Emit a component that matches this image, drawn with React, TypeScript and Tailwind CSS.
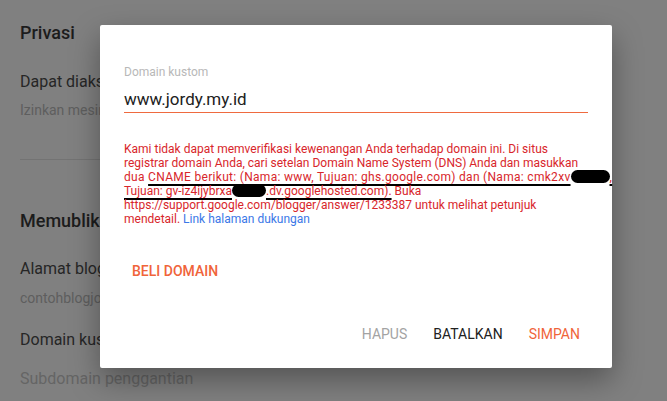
import React from "react";

const Blot = ({ w }: { w: number }) => (
  <span
    className="inline-block h-[13px] bg-black rounded-full align-[-2px]"
    style={{ width: w }}
  />
);

export default function App() {
  return (
    <div
      className="relative w-[667px] h-[401px] overflow-hidden bg-[#808080]"
      style={{ fontFamily: "Roboto, 'Noto Sans', sans-serif" }}
    >
      {/* background page (dimmed) */}
      <div className="flex flex-col pl-[20px] pt-[21px] whitespace-nowrap">
        <div className="text-[18px] leading-[24px] font-medium text-[#1c1c1c]">Privasi</div>
        <div className="mt-[27px] text-[16px] leading-[20px] text-[#262626]">
          Dapat diakses oleh mesin telusur
        </div>
        <div className="mt-[9px] text-[14px] leading-[18px] text-[#5e5e5e]">
          Izinkan mesin telusur menemukan blog Anda
        </div>
        <div className="mt-[40px] w-[300px] border-t border-[#737373]" />
        <div className="mt-[49px] text-[18px] leading-[24px] font-medium text-[#1c1c1c]">
          Memublikasikan
        </div>
        <div className="mt-[26px] text-[16px] leading-[20px] text-[#262626]">Alamat blog</div>
        <div className="mt-[10px] text-[14px] leading-[18px] text-[#5e5e5e]">
          contohblogjordy.blogspot.com
        </div>
        <div className="mt-[23px] text-[16px] leading-[20px] text-[#262626]">Domain kustom</div>
        <div className="mt-[19px] text-[16px] leading-[20px] text-[#656565]">
          Subdomain penggantian
        </div>
      </div>

      {/* dialog */}
      <div className="absolute left-[100px] top-[25px] w-[512px] h-[343px] bg-white rounded-[2px] shadow-[0_12px_30px_rgba(0,0,0,0.35)] flex flex-col">
        <div className="pl-[24px] pr-[24px] pt-[40px]">
          <div className="text-[12px] leading-[14px] text-[#b8b8b8]">Domain kustom</div>
          <div className="mt-[10px] pb-[3px] border-b-[1.5px] border-[#ef6a3f] text-[17px] leading-[20px] text-[#212121]">
            www.jordy.my.id
          </div>
          <div className="mt-[29px] text-[12px] leading-[14px] text-[#d8262b] whitespace-nowrap">
            <div>Kami tidak dapat memverifikasi kewenangan Anda terhadap domain ini. Di situs</div>
            <div>registrar domain Anda, cari setelan Domain Name System (DNS) Anda dan masukkan</div>
            <div className="tracking-[0.3px]">
              dua{" "}
              <span className="underline decoration-black decoration-[1.5px] underline-offset-[3px]">
                CNAME berikut: (Nama: www, Tujuan: ghs.google.com) dan (Nama: cmk2xv
                <Blot w={39} />,
              </span>
            </div>
            <div>
              <span className="underline decoration-black decoration-[1.5px] underline-offset-[3px]">
                Tujuan: gv-iz4ijybrxa
                <Blot w={34} />
                .dv.googlehosted.com).
              </span>{" "}
              Buka
            </div>
            <div>https://support.google.com/blogger/answer/1233387 untuk melihat petunjuk</div>
            <div>
              mendetail. <span className="text-[#3b78e7]">Link halaman dukungan</span>
            </div>
          </div>
        </div>
        <div className="mt-[33px] pl-[24px]">
          <button className="px-[8px] text-[14px] leading-[16px] font-medium text-[#f0643a] uppercase">
            Beli domain
          </button>
        </div>
        <div className="mt-auto mb-[26px] pr-[24px] flex justify-end gap-[10px]">
          <button className="px-[8px] text-[14px] leading-[16px] text-[#a3a3a3] uppercase">Hapus</button>
          <button className="px-[8px] text-[14px] leading-[16px] text-[#212121] uppercase">Batalkan</button>
          <button className="px-[8px] text-[14px] leading-[16px] text-[#f0643a] uppercase">Simpan</button>
        </div>
      </div>
    </div>
  );
}
